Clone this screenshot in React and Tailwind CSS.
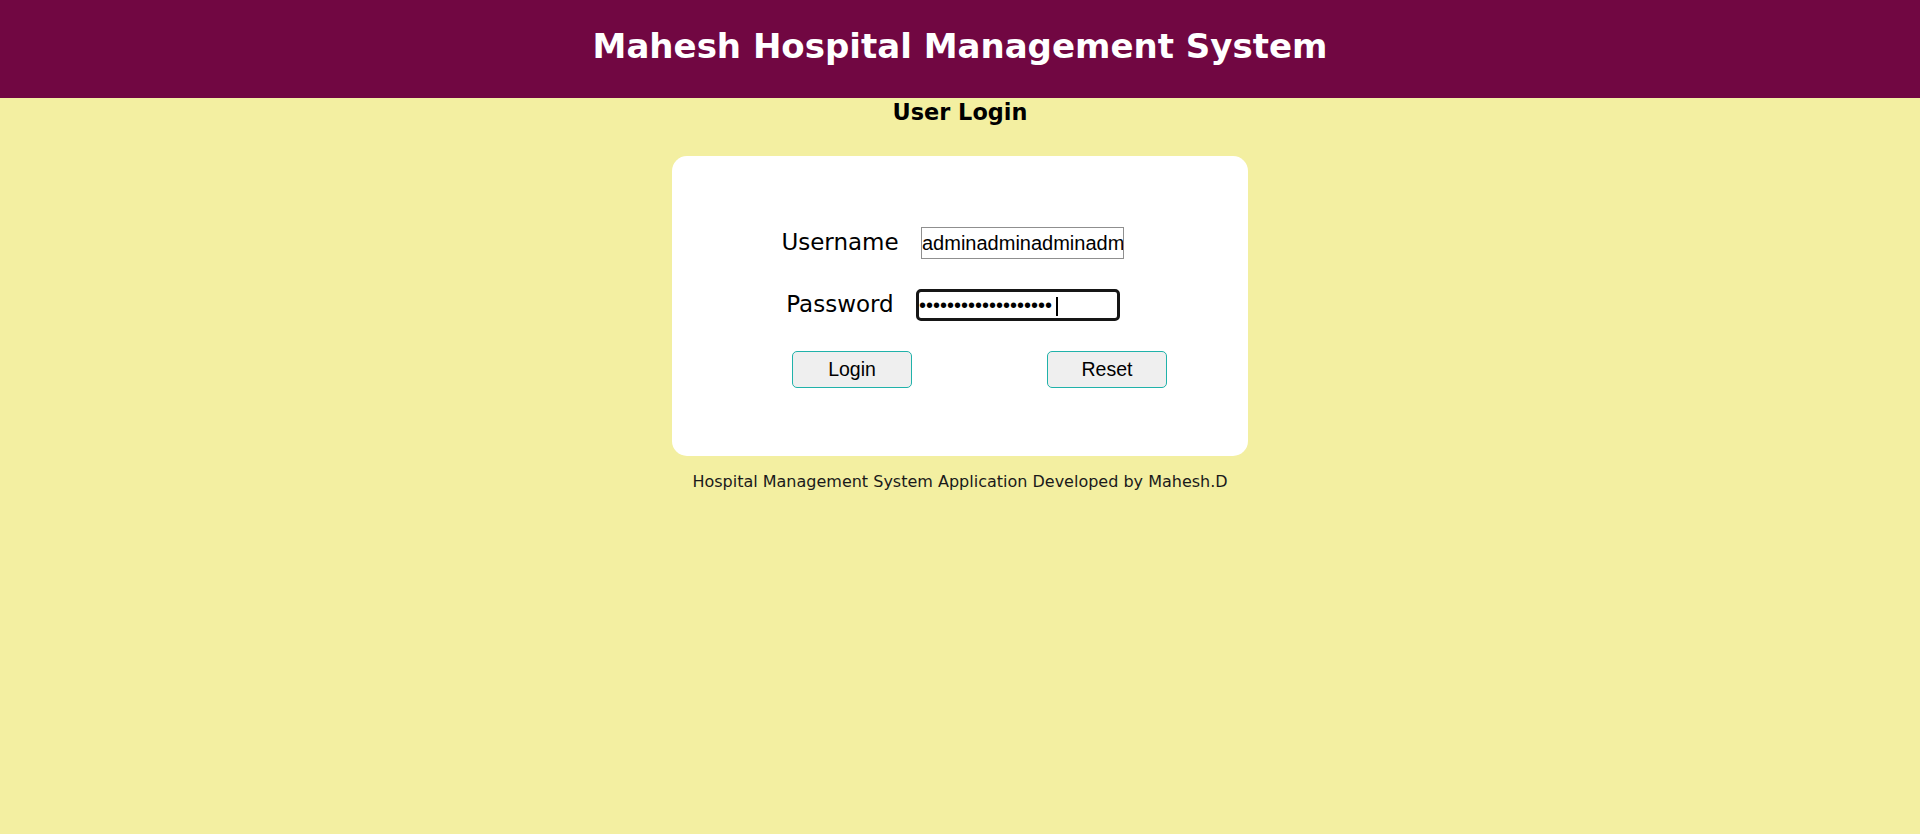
import { useState } from 'react';

// Pantalla de login del sistema de hospital
export default function App() {
    const [usuario, setUsuario] = useState('adminadminadminadmin');
    const [clave, setClave] = useState('adminadminadminadmi');

    return (
        <div className="min-h-screen bg-[#f3efa1] font-['DejaVu_Sans',sans-serif] text-black">
            {/* Cabecera */}
            <header className="h-[98px] bg-[#710742] flex items-center justify-center pb-[6px]">
                <h1 className="text-[34px] leading-[40px] font-bold text-white">
                    Mahesh Hospital Management System
                </h1>
            </header>

            <h2 className="mt-[1px] text-center text-[22.4px] leading-[26px] font-bold">User Login</h2>

            {/* Tarjeta del formulario */}
            <div className="mx-auto mt-[31px] w-[576px] h-[300px] rounded-[15px] bg-white pt-[71px] pl-[98px]">
                <div className="flex flex-col gap-[30px]">
                    <div className="flex items-center h-[32px]">
                        <label className="w-[140px] text-center text-[23px] leading-[26px] -mt-[2px]">Username</label>
                        <input
                            type="text"
                            value={usuario}
                            onChange={(e) => setUsuario(e.target.value)}
                            className="ml-[11px] w-[203px] h-[32px] border border-[#8f8f8f] bg-white px-0 text-[20px] font-['Liberation_Sans',Arial,sans-serif] outline-none"
                        />
                    </div>
                    <div className="flex items-center h-[32px]">
                        <label className="w-[140px] text-center text-[23px] leading-[26px] -mt-[2px]">Password</label>
                        <div className="relative ml-[6px]">
                            <input
                                type="password"
                                value={clave}
                                onChange={(e) => setClave(e.target.value)}
                                className="w-[204px] h-[32px] border-[3px] border-[#161616] rounded-[5px] bg-white px-0 text-[20px] font-['Liberation_Sans',Arial,sans-serif] outline-none"
                            />
                            {/* cursor de texto */}
                            <span className="absolute left-[140px] top-[8px] w-[2px] h-[19px] bg-black" />
                        </div>
                    </div>
                    <div className="flex items-center ml-[22px] gap-[135px]">
                        <button
                            type="button"
                            className="w-[120px] h-[37px] rounded-[5px] border border-[#20b2aa] bg-[#efefef] text-[19.5px] font-['Liberation_Sans',Arial,sans-serif]"
                        >
                            Login
                        </button>
                        <button
                            type="reset"
                            onClick={() => { setUsuario(''); setClave(''); }}
                            className="w-[120px] h-[37px] rounded-[5px] border border-[#20b2aa] bg-[#efefef] text-[19.5px] font-['Liberation_Sans',Arial,sans-serif]"
                        >
                            Reset
                        </button>
                    </div>
                </div>
            </div>

            <p className="mt-[16px] text-center text-[16px] leading-[19px] text-[#1a1a1a]">
                Hospital Management System Application Developed by Mahesh.D
            </p>
        </div>
    );
}
